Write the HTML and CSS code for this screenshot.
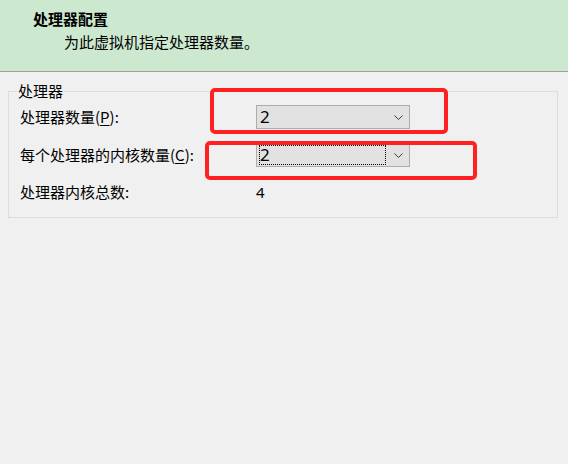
FILE: index.html
```html
<!DOCTYPE html>
<html lang="zh-CN">
<head>
<meta charset="utf-8">
<title>处理器配置</title>
<link rel="stylesheet" href="styles.css">
</head>
<body>
<header class="header">
  <div class="title">处理器配置</div>
  <div class="subtitle">为此虚拟机指定处理器数量。</div>
</header>
<main class="content">
  <section class="group">
    <div class="legend">处理器</div>
    <div class="row">
      <span class="label">处理器数量(<u>P</u>):</span>
      <div class="combo">
        <span class="value">2</span>
        <svg class="chev" width="9" height="5" viewBox="0 0 9 5"><path d="M0.5 0.5 L4.5 4.5 L8.5 0.5" fill="none" stroke="#3c3c3c" stroke-width="1"/></svg>
      </div>
    </div>
    <div class="row row2">
      <span class="label">每个处理器的内核数量(<u>C</u>):</span>
      <div class="combo">
        <span class="value focus">2</span>
        <svg class="chev" width="9" height="5" viewBox="0 0 9 5"><path d="M0.5 0.5 L4.5 4.5 L8.5 0.5" fill="none" stroke="#3c3c3c" stroke-width="1"/></svg>
      </div>
    </div>
    <div class="row row3">
      <span class="label">处理器内核总数:</span>
      <span class="total">4</span>
    </div>
  </section>
</main>
<div class="mark mark1"></div>
<div class="mark mark2"></div>
</body>
</html>
```
FILE: styles.css
```css
html, body {
  margin: 0;
  padding: 0;
}
body {
  width: 568px;
  height: 464px;
  background: #f0f0f0;
  font-family: "Noto Sans CJK SC", "Noto Sans", sans-serif;
  font-size: 15px;
  color: #000;
  position: relative;
  overflow: hidden;
}
.header {
  height: 71px;
  box-sizing: content-box;
  background: #cce8cf;
  border-bottom: 1px solid #a0a0a0;
  padding: 0;
}
.title {
  font-weight: bold;
  line-height: 20px;
  padding: 9px 0 0 33px;
}
.subtitle {
  line-height: 20px;
  padding: 3px 0 0 64px;
}
.content {
  padding: 19px 10px 0 8px;
}
.group {
  position: relative;
  border: 1px solid #dcdcdc;
  padding: 13px 0 12px 11px;
  display: flex;
  flex-direction: column;
}
.legend {
  position: absolute;
  top: -9px;
  left: 8px;
  padding: 0 1px;
  line-height: 16px;
  background: #f0f0f0;
}
.row {
  display: flex;
  align-items: center;
  height: 24px;
}
.row2 {
  margin-top: 14px;
}
.row3 {
  margin-top: 12px;
  height: 26px;
}
.label {
  width: 236px;
  line-height: 20px;
}
.label u {
  text-decoration-thickness: 1px;
  text-underline-offset: 2px;
}
.combo {
  box-sizing: border-box;
  width: 154px;
  height: 24px;
  background: #e1e1e1;
  border: 1px solid #adadad;
  display: flex;
  align-items: center;
  padding: 0 6px 0 2px;
}
.value {
  flex: 1;
  font-family: "Noto Sans", "DejaVu Sans", sans-serif;
  font-size: 17px;
  line-height: 20px;
  padding-left: 1px;
  box-sizing: border-box;
}
.value.focus {
  flex: 0 0 127px;
  height: 20px;
  outline: 1px dotted #000;
  outline-offset: -1px;
  margin-right: 8px;
  line-height: 20px;
}
.chev {
  display: block;
  margin-left: auto;
}
.total {
  font-family: "Noto Sans", "DejaVu Sans", sans-serif;
  font-size: 15px;
  line-height: 20px;
}
.mark {
  position: absolute;
  border: 4px solid #ff2121;
  border-radius: 5px;
  box-sizing: border-box;
}
.mark1 {
  left: 210px;
  top: 88px;
  width: 238px;
  height: 46px;
}
.mark2 {
  left: 205px;
  top: 141px;
  width: 272px;
  height: 39px;
}
```
